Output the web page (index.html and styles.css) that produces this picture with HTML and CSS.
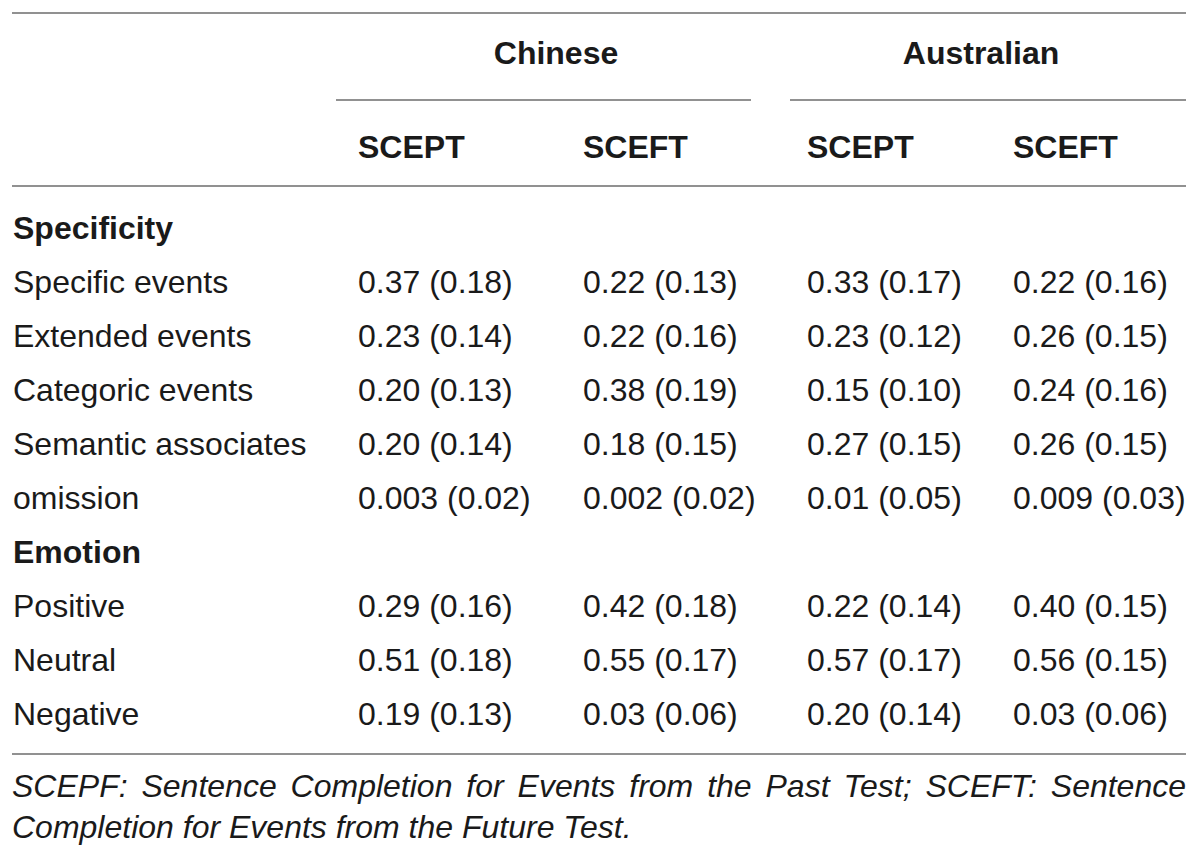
FILE: index.html
```html
<!DOCTYPE html>
<html lang="en">
<head>
<meta charset="utf-8">
<title>SCEPT / SCEFT table</title>
<link rel="stylesheet" href="styles.css">
</head>
<body>
<div class="wrap">
  <table class="data">
    <colgroup>
      <col class="c1"><col class="c2"><col class="c3"><col class="c4"><col class="c5">
    </colgroup>
    <thead>
      <tr class="group-row">
        <th class="blank"></th>
        <th colspan="2" class="grp-cell"><div class="grp grp-cn">Chinese</div></th>
        <th colspan="2" class="grp-cell"><div class="grp grp-au">Australian</div></th>
      </tr>
      <tr class="sub-row">
        <th class="blank"></th>
        <th>SCEPT</th>
        <th>SCEFT</th>
        <th>SCEPT</th>
        <th>SCEFT</th>
      </tr>
    </thead>
    <tbody>
      <tr class="section first"><td colspan="5">Specificity</td></tr>
      <tr><td>Specific events</td><td>0.37 (0.18)</td><td>0.22 (0.13)</td><td>0.33 (0.17)</td><td>0.22 (0.16)</td></tr>
      <tr><td>Extended events</td><td>0.23 (0.14)</td><td>0.22 (0.16)</td><td>0.23 (0.12)</td><td>0.26 (0.15)</td></tr>
      <tr><td>Categoric events</td><td>0.20 (0.13)</td><td>0.38 (0.19)</td><td>0.15 (0.10)</td><td>0.24 (0.16)</td></tr>
      <tr><td>Semantic associates</td><td>0.20 (0.14)</td><td>0.18 (0.15)</td><td>0.27 (0.15)</td><td>0.26 (0.15)</td></tr>
      <tr><td>omission</td><td>0.003 (0.02)</td><td>0.002 (0.02)</td><td>0.01 (0.05)</td><td>0.009 (0.03)</td></tr>
      <tr class="section"><td colspan="5">Emotion</td></tr>
      <tr><td>Positive</td><td>0.29 (0.16)</td><td>0.42 (0.18)</td><td>0.22 (0.14)</td><td>0.40 (0.15)</td></tr>
      <tr><td>Neutral</td><td>0.51 (0.18)</td><td>0.55 (0.17)</td><td>0.57 (0.17)</td><td>0.56 (0.15)</td></tr>
      <tr class="last"><td>Negative</td><td>0.19 (0.13)</td><td>0.03 (0.06)</td><td>0.20 (0.14)</td><td>0.03 (0.06)</td></tr>
    </tbody>
  </table>
  <p class="note">SCEPF: Sentence Completion for Events from the Past Test; SCEFT: Sentence Completion for Events from the Future Test.</p>
</div>
</body>
</html>
```

FILE: styles.css
```css
html, body {
  margin: 0;
  padding: 0;
  background: #ffffff;
}

body {
  font-family: "Liberation Sans", Arial, Helvetica, sans-serif;
  color: #1a1a1a;
}

.wrap {
  width: 1174px;
  padding: 12px 0 0 12px;
}

.data {
  width: 1174px;
  table-layout: fixed;
  border-collapse: collapse;
  border-top: 2px solid #919191;
  border-bottom: 2px solid #919191;
  font-size: 32px;
}

.c1 { width: 324px; }
.c2 { width: 225px; }
.c3 { width: 224px; }
.c4 { width: 206px; }
.c5 { width: 195px; }

th, td {
  padding: 0 0 0 22px;
  text-align: left;
  white-space: nowrap;
  font-weight: normal;
}

th:first-child, td:first-child {
  padding-left: 1px;
}

thead th {
  font-weight: bold;
}

.group-row th {
  padding: 0;
  vertical-align: bottom;
}

.grp {
  padding: 21px 0 28px 0;
  line-height: 36px;
  border-bottom: 2px solid #919191;
  text-align: center;
}

.grp-cn {
  margin-right: 34px;
  padding-left: 25px;
}

.grp-au {
  margin-left: 5px;
  padding-right: 14px;
}

.sub-row th {
  padding-top: 28px;
  padding-bottom: 20px;
  line-height: 36px;
  border-bottom: 2px solid #919191;
}

.sub-row th.blank {
  padding-left: 0;
}

tbody td {
  height: 54px;
  line-height: 54px;
  vertical-align: middle;
}

tbody tr.section td {
  font-weight: bold;
}

tbody tr.first td {
  padding-top: 14px;
}

tbody tr.last td {
  padding-bottom: 12px;
}

.note {
  margin: 11px 0 0 0;
  font-size: 32px;
  line-height: 41px;
  font-style: italic;
  text-align: justify;
  color: #1a1a1a;
}
```
